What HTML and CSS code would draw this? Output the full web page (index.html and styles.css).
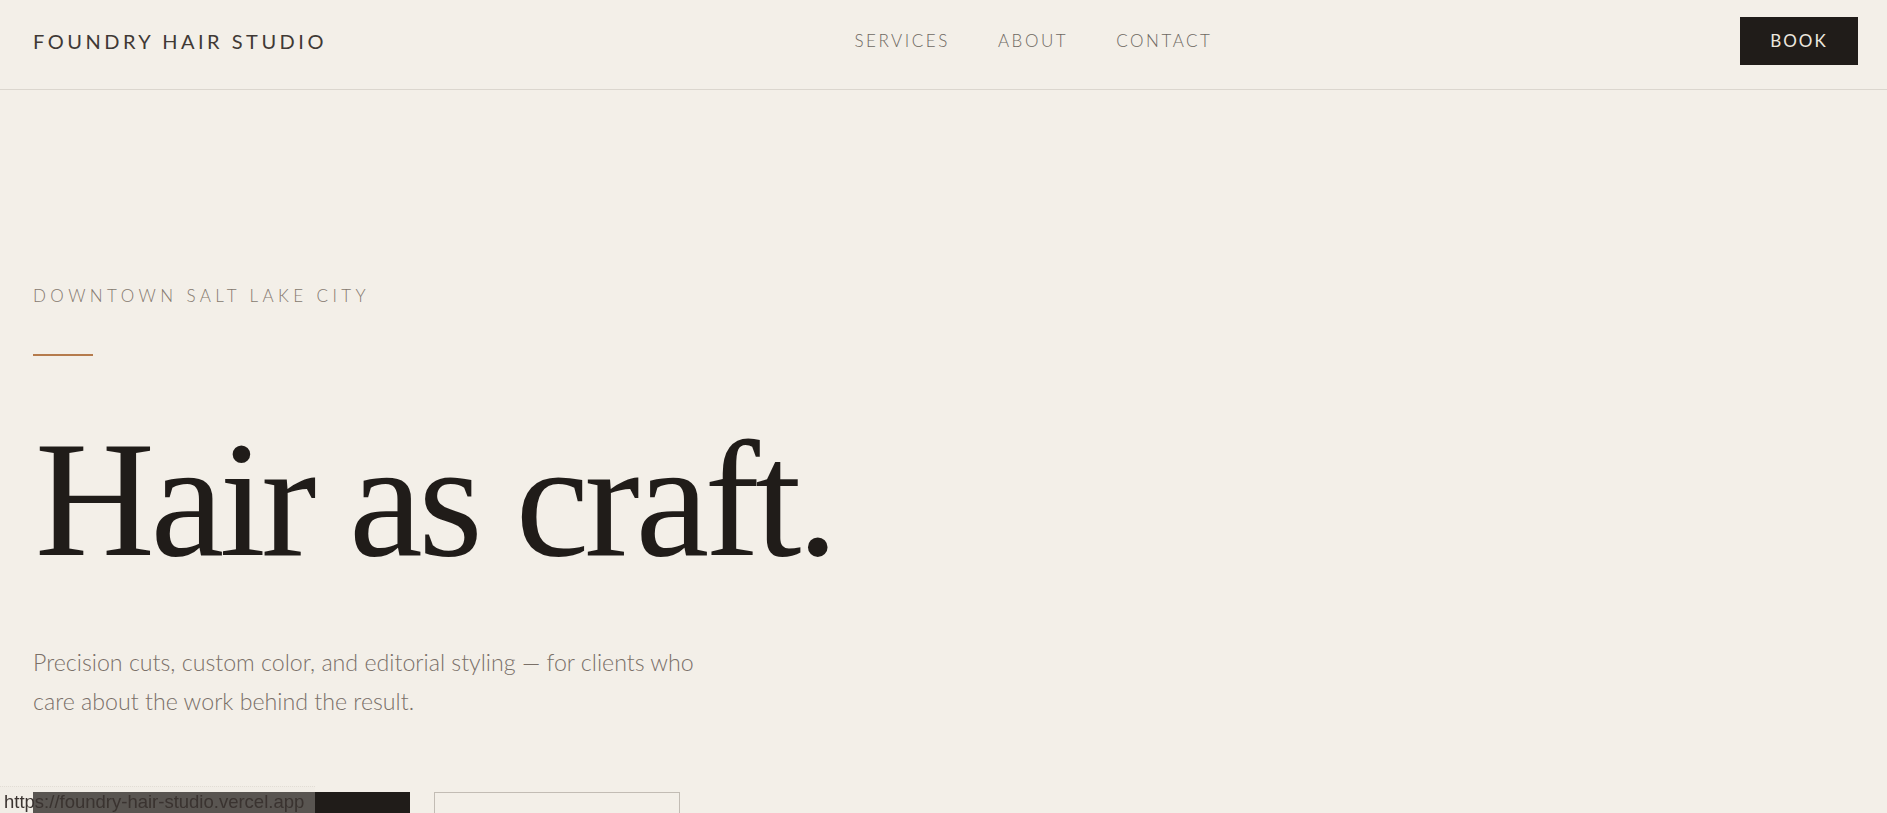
FILE: index.html
```html
<!DOCTYPE html>
<html lang="en">
<head>
    <meta charset="UTF-8">
    <meta name="viewport" content="width=device-width, initial-scale=1.0">
    <title>Foundry Hair Studio</title>
    <link rel="stylesheet" href="styles.css">
</head>
<body>
    <header class="header">
        <a href="#" class="logo">FOUNDRY HAIR STUDIO</a>
        <nav class="nav">
            <a href="#services">SERVICES</a>
            <a href="#about">ABOUT</a>
            <a href="#contact">CONTACT</a>
        </nav>
        <a href="#book" class="btn-book">BOOK</a>
    </header>

    <section class="hero">
        <p class="eyebrow">DOWNTOWN SALT LAKE CITY</p>
        <div class="rule"></div>
        <h1>Hair as craft.</h1>
        <p class="lead">Precision cuts, custom color, and editorial styling — for clients who care about the work behind the result.</p>
        <div class="actions">
            <a href="#book" class="btn primary">BOOK AN APPOINTMENT</a>
            <a href="#services" class="btn outline">VIEW SERVICES</a>
        </div>
    </section>

    <div class="status-bubble">https://foundry-hair-studio.vercel.app</div>
</body>
</html>
```

FILE: styles.css
```css
* {
    margin: 0;
    padding: 0;
    box-sizing: border-box;
}

body {
    font-family: 'Lato', 'Noto Sans', sans-serif;
    background: #f3efe8;
    color: #201c19;
    overflow: hidden;
}

a {
    text-decoration: none;
    color: inherit;
}

.header {
    display: flex;
    align-items: center;
    justify-content: space-between;
    height: 90px;
    padding: 0 29px 8px 33px;
    border-bottom: 1px solid #dbd6ce;
}

.logo {
    font-size: 20px;
    font-weight: 400;
    letter-spacing: 0.175em;
    color: #3f3935;
}

.nav {
    display: flex;
    gap: 48px;
}

.nav a {
    font-size: 17px;
    font-weight: 300;
    letter-spacing: 0.15em;
    color: #6e6862;
}

.btn-book {
    display: flex;
    align-items: center;
    justify-content: center;
    width: 118px;
    height: 48px;
    background: #201c19;
    color: #ece7df;
    font-size: 17px;
    letter-spacing: 0.12em;
}

.hero {
    padding: 0 33px;
}

.eyebrow {
    margin-top: 195px;
    font-size: 17px;
    font-weight: 300;
    letter-spacing: 0.26em;
    color: #85796f;
}

.rule {
    width: 60px;
    height: 2px;
    background: #b57b4c;
    margin-top: 48px;
}

h1 {
    font-family: 'Liberation Serif', serif;
    font-weight: 400;
    font-size: 166px;
    letter-spacing: -0.027em;
    line-height: 1;
    margin-top: 60px;
    margin-left: 2px;
    color: #201c19;
}

.lead {
    max-width: 700px;
    margin-top: 61px;
    font-size: 23.2px;
    font-weight: 300;
    line-height: 1.66;
    color: #7a7068;
}

.actions {
    display: flex;
    gap: 24px;
    margin-top: 72px;
}

.btn {
    display: inline-flex;
    align-items: center;
    justify-content: center;
    height: 64px;
    font-size: 16px;
    letter-spacing: 0.2em;
}

.btn.primary {
    width: 377px;
    background: #201c19;
    color: #ece7df;
}

.btn.outline {
    width: 246px;
    border: 1px solid #c2bcb4;
    color: #3b3531;
}

.status-bubble {
    position: fixed;
    left: 0;
    bottom: 0;
    width: 315px;
    height: 27px;
    padding: 4px 0 0 4px;
    background: rgba(238, 232, 226, 0.28);
    border-top: 1px dotted #e2ddd5;
    font-family: 'Liberation Sans', sans-serif;
    font-size: 18.5px;
    line-height: 1.2;
    color: #3a3330;
    white-space: nowrap;
    overflow: hidden;
}
```
